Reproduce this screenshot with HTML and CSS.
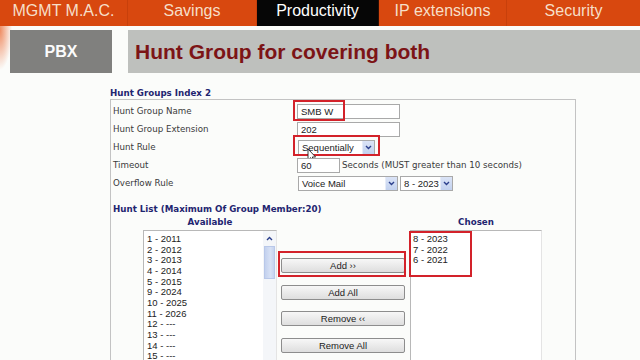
FILE: index.html
```html
<!DOCTYPE html>
<html lang="en">
<head>
<meta charset="utf-8">
<title>Hunt Group</title>
<link rel="stylesheet" href="styles.css">
</head>
<body>
<nav class="nav">
  <div class="tab t1">MGMT M.A.C.</div>
  <div class="tab t2">Savings</div>
  <div class="tab t3 active">Productivity</div>
  <div class="tab t4">IP extensions</div>
  <div class="tab t5">Security</div>
</nav>
<header class="hdr">
  <div class="pbx">PBX</div>
  <h1 class="title">Hunt Group for covering both</h1>
</header>
<main class="form">
  <div class="caption">Hunt Groups Index 2</div>
  <div class="box">
    <div class="grid">
      <div class="lbl">Hunt Group Name</div>
      <div class="cell"><div class="inp w-name">SMB W</div><span class="mark mark-name"></span></div>
      <div class="lbl">Hunt Group Extension</div>
      <div class="cell"><div class="inp w-name">202</div></div>
      <div class="lbl">Hunt Rule</div>
      <div class="cell">
        <div class="sel w-rule"><span class="val">Sequentially</span><span class="arrow"><svg width="7" height="5" viewBox="0 0 7 5"><path d="M1 1 L3.5 3.5 L6 1" fill="none" stroke="#2b3f8c" stroke-width="1.4"/></svg></span></div>
        <span class="mark mark-rule"></span>
        <svg class="cursor" width="10" height="15" viewBox="0 0 10 15"><path d="M1 1 L1 12 L3.6 9.6 L5.6 14 L7.2 13.3 L5.3 9 L8.6 9 Z" fill="#fff" stroke="#222" stroke-width="0.9" stroke-linejoin="round"/></svg>
      </div>
      <div class="lbl">Timeout</div>
      <div class="cell"><div class="inp w-time">60</div><span class="hint">Seconds (MUST greater than 10 seconds)</span></div>
      <div class="lbl">Overflow Rule</div>
      <div class="cell">
        <div class="sel w-over"><span class="val">Voice Mail</span><span class="arrow"><svg width="7" height="5" viewBox="0 0 7 5"><path d="M1 1 L3.5 3.5 L6 1" fill="none" stroke="#2b3f8c" stroke-width="1.4"/></svg></span></div>
        <div class="sel w-ext"><span class="val">8 - 2023</span><span class="arrow"><svg width="7" height="5" viewBox="0 0 7 5"><path d="M1 1 L3.5 3.5 L6 1" fill="none" stroke="#2b3f8c" stroke-width="1.4"/></svg></span></div>
      </div>
    </div>

    <div class="listcap">Hunt List (Maximum Of Group Member:20)</div>
    <div class="lists">
      <div class="col col-avail">
        <div class="colhead">Available</div>
        <div class="listbox avail">
          <div class="items">
            <div>1 - 2011</div><div>2 - 2012</div><div>3 - 2013</div><div>4 - 2014</div>
            <div>5 - 2015</div><div>9 - 2024</div><div>10 - 2025</div><div>11 - 2026</div>
            <div>12 - ---</div><div>13 - ---</div><div>14 - ---</div><div>15 - ---</div>
          </div>
          <div class="sb">
            <div class="sb-up"><svg width="7" height="5" viewBox="0 0 7 5"><path d="M1 4 L3.5 1.5 L6 4" fill="none" stroke="#2b3f8c" stroke-width="1.4"/></svg></div>
            <div class="sb-thumb"></div>
          </div>
        </div>
      </div>
      <div class="btns">
        <div class="btnwrap"><div class="btn">Add &rsaquo;&rsaquo;</div><span class="mark mark-add"></span></div>
        <div class="btn">Add All</div>
        <div class="btn">Remove &lsaquo;&lsaquo;</div>
        <div class="btn">Remove All</div>
      </div>
      <div class="col col-chosen">
        <div class="colhead">Chosen</div>
        <div class="listbox chosen">
          <div class="items">
            <div>8 - 2023</div><div>7 - 2022</div><div>6 - 2021</div>
          </div>
          <span class="mark mark-chosen"></span>
        </div>
      </div>
    </div>
  </div>
</main>
</body>
</html>
```

FILE: styles.css
```css
* { box-sizing: border-box; }
html, body { margin: 0; padding: 0; }
body {
  width: 640px;
  height: 360px;
  overflow: hidden;
  background:
    radial-gradient(ellipse 12px 40px at 0 30px, rgba(236,112,60,0.8), rgba(236,112,60,0)) no-repeat,
    #fbfcfa;
  font-family: "Liberation Sans", Arial, sans-serif;
}

/* top navigation */
.nav {
  display: flex;
  height: 26px;
  background: #d8480f;
}
.tab {
  display: flex;
  align-items: center;
  justify-content: center;
  padding-bottom: 4px;
  font-size: 16px;
  color: #f6dfc8;
  border-right: 1px solid rgba(150,40,0,0.25);
}
.t1 { width: 128px; }
.t2 { width: 129px; }
.t3 { width: 122px; }
.t4 { width: 128px; }
.t5 { flex: 1; border-right: 0; }
.tab.active { background: #060606; color: #ffffff; }

/* section header */
.hdr {
  display: flex;
  height: 43px;
  margin-top: 4px;
  padding-left: 10px;
}
.pbx {
  width: 102px;
  background: #80807e;
  color: #fbfbfb;
  font-weight: bold;
  font-size: 16px;
  display: flex;
  align-items: center;
  justify-content: center;
}
.title {
  flex: 1;
  margin: 0 0 0 16px;
  background: #bec0bd;
  color: #7c1416;
  font-size: 21px;
  font-weight: bold;
  display: flex;
  align-items: center;
  padding-left: 7px;
}

/* form */
.form {
  margin-left: 110px;
  width: 466px;
  font-family: "DejaVu Sans", Verdana, sans-serif;
  font-size: 8.7px;
  color: #3a3a3a;
}
.caption {
  margin-top: 14px;
  height: 12px;
  line-height: 12px;
  font-weight: bold;
  color: #1f2570;
}
.box {
  border: 1px solid #c3c3c3;
  padding: 2px 2px 0 2px;
  height: 280px;
}
.grid {
  display: grid;
  grid-template-columns: 184px 1fr;
  grid-auto-rows: 18px;
}
.lbl { display: flex; align-items: center; }
.cell {
  position: relative;
  display: flex;
  align-items: center;
  gap: 2px;
}

.inp, .sel {
  height: 15px;
  border: 1px solid #a9a9a9;
  background: #fff;
  font-family: "Liberation Sans", Arial, sans-serif;
  font-size: 9.5px;
  color: #222;
  display: flex;
  align-items: center;
}
.inp { padding-left: 3px; }
.w-name { width: 103px; }
.w-time { width: 43px; }

.sel { justify-content: space-between; padding-left: 3px; margin-left: 1px; }
.sel + .sel { margin-left: 0; }
.w-rule { width: 77px; }
.w-over { width: 100px; }
.w-ext { width: 53px; }
.arrow {
  width: 12px;
  height: 13px;
  background: linear-gradient(#dbe4f6, #c2d1ef);
  border-left: 1px solid #e6ecf8;
  display: flex;
  align-items: center;
  justify-content: center;
}

.mark {
  position: absolute;
  border: 2px solid #d3222a;
  pointer-events: none;
}
.mark-name { left: -4px; top: -2px; width: 52px; height: 21px; }
.mark-rule { left: -4px; top: -3px; width: 87px; height: 21px; }
.cursor { position: absolute; left: 10px; top: 10px; }

/* hunt list */
.listcap {
  margin-top: 11px;
  height: 13px;
  line-height: 13px;
  font-weight: bold;
  color: #1f2570;
}
.lists {
  display: flex;
  margin-left: 30px;
}
.colhead {
  height: 14px;
  line-height: 13px;
  text-align: center;
  font-weight: bold;
  color: #1f2570;
}
.col-avail { width: 134px; }
.col-chosen { width: 132px; margin-left: 5px; }
.listbox {
  position: relative;
  height: 140px;
  border: 1px solid #b8b8b8;
  border-right-color: #e4e4e4;
  border-bottom: 0;
  background: #fff;
  display: flex;
}
.items {
  flex: 1;
  padding: 3px 0 0 3px;
  font-family: "Liberation Sans", Arial, sans-serif;
  font-size: 9.5px;
  line-height: 10.67px;
  color: #222;
}
.chosen .items { padding-left: 2px; }
.sb {
  width: 13px;
  background: #f4f6f9;
  display: flex;
  flex-direction: column;
  align-items: center;
}
.sb-up {
  height: 14px;
  width: 12px;
  display: flex;
  align-items: center;
  justify-content: center;
}
.sb-thumb {
  width: 11px;
  height: 33px;
  margin-top: 1px;
  background: linear-gradient(90deg, #c3d1ee, #d7e1f5 60%, #c6d3ef);
  border: 1px solid #b9c8e9;
}

.btns {
  width: 124px;
  margin-left: 4px;
  padding-top: 42px;
  display: flex;
  flex-direction: column;
  gap: 11.5px;
}
.btnwrap { position: relative; }
.btn {
  height: 15px;
  border: 1px solid #8d8d8d;
  border-radius: 2px;
  background: linear-gradient(#f7f7f7, #dedede);
  font-family: "Liberation Sans", Arial, sans-serif;
  font-size: 9.5px;
  color: #222;
  display: flex;
  align-items: center;
  justify-content: center;
}
.mark-add { left: -3px; top: -7px; width: 128px; height: 26px; }
.mark-chosen { left: -2px; top: 0; width: 63px; height: 46px; }
```
